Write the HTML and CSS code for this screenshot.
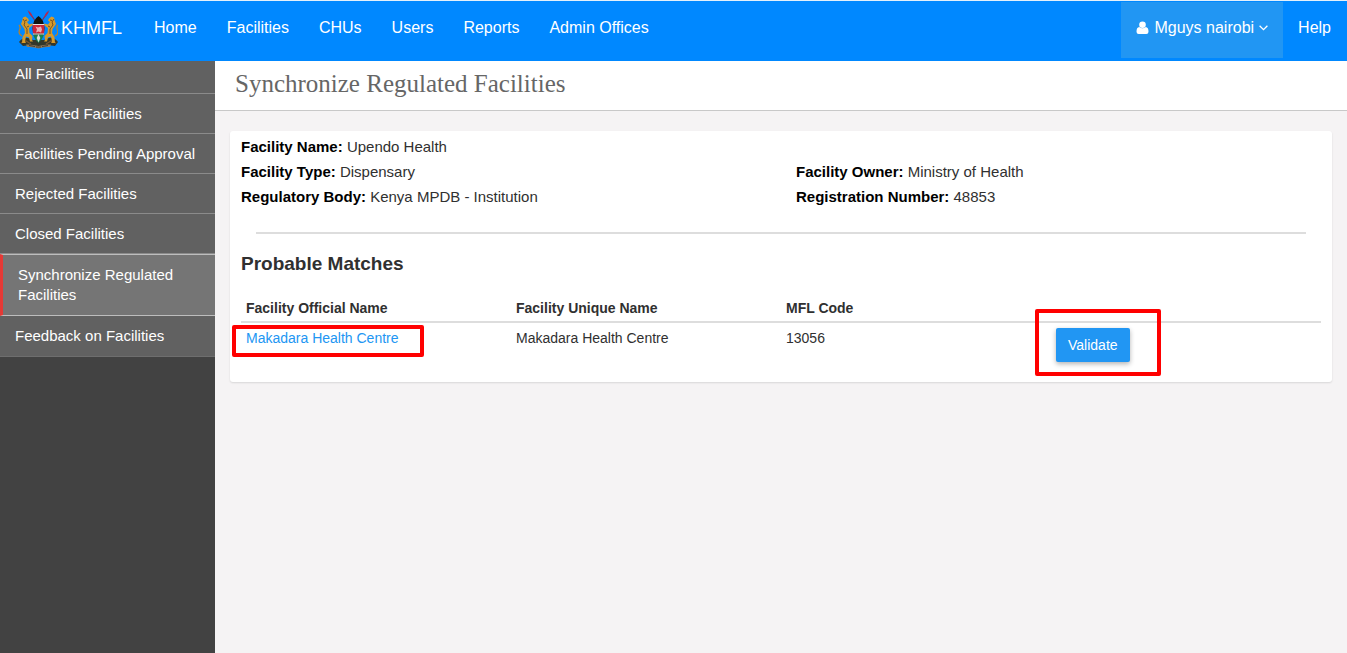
FILE: index.html
```html
<!DOCTYPE html>
<html lang="en">
<head>
<meta charset="utf-8">
<title>KHMFL - Synchronize Regulated Facilities</title>
<link rel="stylesheet" href="styles.css">
</head>
<body>
<header class="topbar">
  <a class="brand" href="#">
    <svg class="crest" viewBox="0 0 40 42" aria-hidden="true">
      <path d="M11 3l7 10M30 3l-7 10" stroke="#6a3566" stroke-width="1.2"/>
      <path d="M9.500 1l3.500 3 3 6-4-4zM31.500 1L28 4l-3 6 4-4z" fill="#b8264c"/>
      <path d="M1 33q4-5 9-4l5 2h11l5-2q5-1 9 4l-3 4-8-1-8 2-8-2-8 1z" fill="#33372a"/>
      <path d="M3 34l5-2 5 3M38 34l-5-2-5 3" stroke="#7b5630" stroke-width="1.200" fill="none"/>
      <g id="lion">
        <path d="M5 8.500l2.500-1L10 9.500l1 2-2 1.500 2 2.500 3.500-1 .5 1.500-4 3 .5 5 3 3-.5 4 1 1.500h-3l-1-4-3-1-1 5 1 1.500H4l.5-6L7 24l-.5-4-3.500-5 1-2.500z" fill="#d59a2c"/>
        <path d="M4 27Q0 25 1.500 21q1.500-3-.5-5" fill="none" stroke="#b08232" stroke-width="1.300"/>
        <path d="M5 10l2 3-1 3 3 4v5M9 11l-2 .5M11 17l-2 1" fill="none" stroke="#755222" stroke-width="1"/>
      </g>
      <use href="#lion" transform="matrix(-1 0 0 1 41 0)"/>
      <path d="M20.500 7q5 3 6 12-.5 9-6 15-5.500-6-6-15 1-9 6-12z" fill="#121512"/>
      <path d="M14.800 15.500h11.400q.6 4.500-.2 9H15q-.8-4.500-.2-9z" fill="#cc2638"/>
      <path d="M15 25.500h11q-1.500 5-5.500 8.500-4-3.500-5.500-8.500z" fill="#18824d"/>
      <path d="M14.800 15.500h11.400M15 25h11" stroke="#e8e2e0" stroke-width="1"/>
      <path d="M20.500 25l-1.800 4 1.800 4.500 1.800-4.500z" fill="#d6ded8"/>
      <path d="M17.500 17.500l2.500 1 3-1 1 3-1 3-2.500-1-2.500 1 1-3z" fill="#e6b2b6"/>
      <path d="M8 35.500q6-.5 12.500 1.500 6.500-2 12.500-1.500l-1 2.500q-6-.5-11.500 1.500Q15 37.500 9 38z" fill="#8d7b5c"/>
      <path d="M11 36.500l6 1M24 37.500l6-1M18 38h5" stroke="#3f3327" stroke-width=".9"/>
    </svg>
    <span>KHMFL</span>
  </a>
  <nav class="menu">
    <a href="#">Home</a>
    <a href="#">Facilities</a>
    <a href="#">CHUs</a>
    <a href="#">Users</a>
    <a href="#">Reports</a>
    <a href="#">Admin Offices</a>
  </nav>
  <div class="account">
    <button class="user" type="button">
      <svg class="person" viewBox="0 0 13 14" aria-hidden="true"><circle cx="6.500" cy="3.700" r="3.300"/><path d="M3.200 6Q6.500 8.500 9.800 6q2.700.3 2.700 4.800 0 2.200-2.200 2.200H2.700Q.5 13 .5 10.800.5 6.300 3.200 6z"/></svg>
      <span>Mguys nairobi</span>
      <svg class="chevron" viewBox="0 0 9 6" aria-hidden="true"><path d="M.6.800l3.900 3.900L8.400.800"/></svg>
    </button>
    <a class="help" href="#">Help</a>
  </div>
</header>
<div class="layout">
  <nav class="sidebar">
    <a href="#">All Facilities</a>
    <a href="#">Approved Facilities</a>
    <a href="#">Facilities Pending Approval</a>
    <a href="#">Rejected Facilities</a>
    <a href="#">Closed Facilities</a>
    <a class="active" href="#">Synchronize Regulated Facilities</a>
    <a href="#">Feedback on Facilities</a>
  </nav>
  <main class="content">
    <h1 class="title">Synchronize Regulated Facilities</h1>
    <section class="card">
      <div class="details">
        <p class="wide"><b>Facility Name:</b> Upendo Health</p>
        <p><b>Facility Type:</b> Dispensary</p>
        <p><b>Facility Owner:</b> Ministry of Health</p>
        <p><b>Regulatory Body:</b> Kenya MPDB - Institution</p>
        <p><b>Registration Number:</b> 48853</p>
      </div>
      <hr class="rule">
      <h2 class="subtitle">Probable Matches</h2>
      <table class="matches">
        <thead>
          <tr><th>Facility Official Name</th><th>Facility Unique Name</th><th>MFL Code</th><th></th></tr>
        </thead>
        <tbody>
          <tr>
            <td><span class="marked mark-link"><a href="#">Makadara Health Centre</a></span></td>
            <td>Makadara Health Centre</td>
            <td>13056</td>
            <td><span class="marked mark-button"><button class="validate" type="button">Validate</button></span></td>
          </tr>
        </tbody>
      </table>
    </section>
  </main>
</div>
</body>
</html>
```
FILE: styles.css
```css
* { box-sizing: border-box; }

body {
  display: flex;
  flex-direction: column;
  min-height: 100vh;
  margin: 0;
  background: #f5f3f4;
  color: #303030;
  font: 15px/20px "Liberation Sans", Arial, sans-serif;
}

a { text-decoration: none; }

.topbar {
  display: flex;
  min-height: 61px;
  border-top: 1px solid #e3f0fb;
  background: #0088ff;
  color: #fff;
  font-size: 16px;
}
.topbar a { color: #fff; }

.brand {
  display: flex;
  align-items: flex-start;
  gap: 3px;
  padding: 8px 17px 0 18px;
  font-size: 18px;
}
.brand span { padding-top: 9px; }
.crest { width: 40px; height: 42px; fill: none; }

.menu { display: flex; }
.menu a { padding: 17px 15px; }

.account { display: flex; margin-left: auto; }
.help { padding: 17px 16px 17px 15px; }

.user {
  display: flex;
  align-items: flex-start;
  gap: 5px;
  margin: 1px 0 3px;
  padding: 16px 15px;
  border: 0;
  background: #2196f3;
  color: #fff;
  font: inherit;
}
.person { width: 13px; height: 14px; margin-top: 3px; fill: #fff; }
.chevron { width: 9px; height: 6px; margin-top: 7px; fill: none; stroke: #fff; stroke-width: 1.3; }

.layout { display: flex; flex: 1; }

.sidebar { flex: 0 0 215px; background: #424242; }
.sidebar a {
  display: block;
  padding: 10px 15px 9px;
  border-bottom: 1px solid #8b8b8b;
  background: #616161;
  color: #fff;
}
.sidebar a:first-child { padding-top: 3px; }
.sidebar a:last-child { padding-bottom: 10px; border-color: #6e6e6e; }
.sidebar .active {
  padding-bottom: 10px;
  border-top: 1px solid #bdbdbd;
  border-bottom-color: #bdbdbd;
  border-left: 3px solid #e53935;
  background: #757575;
}

.content { flex: 1; min-width: 0; }

.title {
  margin: 0;
  padding: 8px 20px 11px;
  border-bottom: 1px solid #c8c8c8;
  background: #fff;
  color: #666;
  font: 25px/30px "Liberation Serif", "Times New Roman", serif;
}

.card {
  margin: 20px 15px;
  padding: 3px 11px 20px;
  border-radius: 3px;
  background: #fff;
  box-shadow: 0 1px 2px rgba(0, 0, 0, .12);
}

.details { display: grid; grid-template-columns: 1fr 1fr; column-gap: 30px; line-height: 25px; }
.details p { margin: 0; }
.details b { color: #000; }
.wide { grid-column: 1 / -1; }

.rule { margin: 23px 15px 20px; border: 0; border-top: 2px solid #ddd; }

.subtitle { margin: 0 0 24px; font-size: 19px; line-height: 20px; }

.matches { width: 100%; border-collapse: collapse; table-layout: fixed; font-size: 14px; }
.matches th { padding: 0 5px 3px; border-bottom: 2px solid #ddd; text-align: left; }
.matches td { padding: 5px 5px 0; vertical-align: top; }
.matches a { color: #2196f3; }

.marked { position: relative; display: inline-block; }
.marked::after {
  position: absolute;
  border: 4px solid #f00;
  border-radius: 2px;
  content: "";
  pointer-events: none;
}
.mark-link::after { inset: -3px -25px -9px -14px; }
.mark-button::after { inset: -19px -31px -14px -21px; }

.validate {
  display: block;
  padding: 7px 12px;
  border: 0;
  border-radius: 2px;
  background: #2196f3;
  box-shadow: 0 2px 5px rgba(0, 0, 0, .3);
  color: #fff;
  font: 14px/20px "Liberation Sans", Arial, sans-serif;
}
```
